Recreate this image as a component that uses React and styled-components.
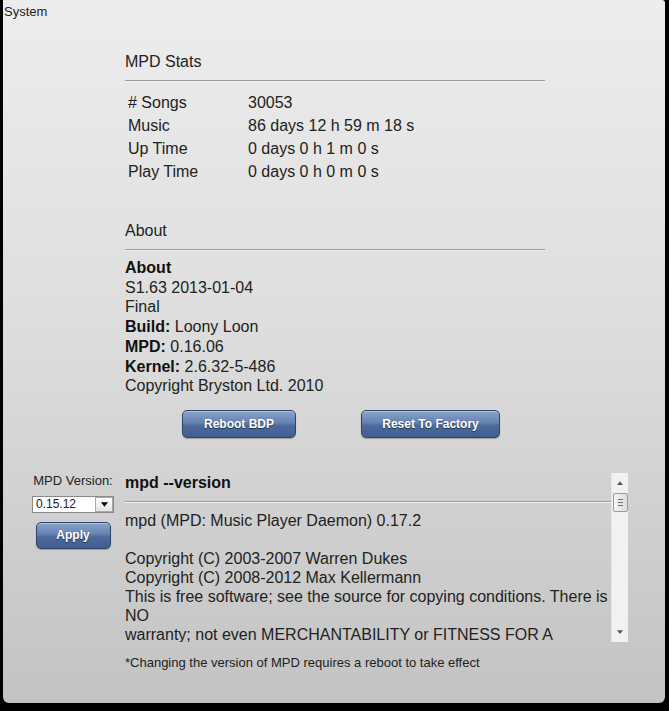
import React from "react";
import styled, { createGlobalStyle } from "styled-components";

const Global = createGlobalStyle`
  html, body {
    margin: 0;
    padding: 0;
    background: #000;
  }
  body {
    font-family: "Liberation Sans", Arial, sans-serif;
    color: #222;
  }
`;

const Panel = styled.div`
  margin-left: 3px;
  width: 662px;
  height: 703px;
  box-sizing: border-box;
  background: linear-gradient(to bottom, #ededed 0%, #dedede 45%, #c3c3c3 100%);
  border-radius: 0 3px 6px 6px;
  overflow: hidden;
`;

const Title = styled.div`
  padding: 4px 0 0 1px;
  font-size: 13px;
  line-height: 16px;
`;

const Column = styled.div`
  margin-left: 122px;
  width: 420px;
`;

const Heading = styled.div`
  margin-top: ${(p) => p.$top}px;
  font-size: 16px;
  line-height: 22px;
`;

const Rule = styled.div`
  margin-top: ${(p) => p.$gap || 7}px;
  height: 0;
  border-top: 1px solid #9c9c9c;
  border-bottom: 1px solid #f2f2f2;
`;

const StatsGrid = styled.div`
  margin-top: 9px;
  display: grid;
  grid-template-columns: 120px 1fr;
  font-size: 16px;
  line-height: 23px;

  span {
    padding-left: 3px;
  }
`;

const AboutList = styled.div`
  margin-top: 7px;
  font-size: 16px;
  line-height: 19.7px;

  b {
    font-weight: bold;
    color: #111;
  }
`;

const ButtonRow = styled.div`
  margin-top: 14px;
  padding-left: 57px;
  display: flex;
  gap: 65px;
`;

const BlueButton = styled.button`
  width: ${(p) => p.$w}px;
  height: ${(p) => p.$h || 28}px;
  box-sizing: border-box;
  border: 1px solid #2f4468;
  border-radius: 5px;
  background: linear-gradient(to bottom, #8aa3c9 0%, #6582b1 45%, #4d6b9d 55%, #3f5d8e 100%);
  box-shadow: inset 0 1px 0 rgba(255, 255, 255, 0.35), 0 1px 1px rgba(0, 0, 0, 0.25);
  color: #fff;
  font-family: "Liberation Sans", Arial, sans-serif;
  font-weight: bold;
  font-size: 12px;
  text-shadow: 0 1px 1px rgba(0, 0, 0, 0.55);
  padding: 0;
  cursor: pointer;
`;

const BottomRow = styled.div`
  margin-top: 35px;
  padding-left: 28px;
  display: flex;
  align-items: flex-start;
`;

const Side = styled.div`
  width: 84px;
  display: flex;
  flex-direction: column;
  align-items: center;
`;

const SideLabel = styled.div`
  font-size: 13px;
  line-height: 16px;
`;

const Select = styled.div`
  margin-top: 7px;
  width: 82px;
  height: 17px;
  box-sizing: border-box;
  border: 1px solid #8a8a8a;
  background: #fff;
  display: flex;
  align-items: stretch;
  font-size: 12px;
`;

const SelectValue = styled.div`
  flex: 1;
  padding-left: 3px;
  line-height: 15px;
`;

const SelectArrow = styled.div`
  width: 16px;
  border: 1px solid #a9a9a9;
  background: linear-gradient(to bottom, #fdfdfd, #e4e4e4);
  display: flex;
  align-items: center;
  justify-content: center;
`;

const ApplyWrap = styled.div`
  margin-top: 9px;
`;

const OutputBox = styled.div`
  margin-left: 5px;
  width: 508px;
  height: 169px;
  display: flex;
`;

const OutputContent = styled.div`
  flex: 1;
  overflow: hidden;
  padding-left: 5px;
`;

const OutputTitle = styled.div`
  font-size: 16px;
  font-weight: bold;
  line-height: 19px;
  color: #111;
`;

const OutputText = styled.div`
  margin-top: 8px;
  font-size: 16px;
  line-height: 19px;
  white-space: pre;
`;

const Scrollbar = styled.div`
  width: 17px;
  background: #f1f1f1;
  border-left: 1px solid #e6e6e6;
  box-sizing: border-box;
  display: flex;
  flex-direction: column;
  align-items: center;
`;

const ScrollArrow = styled.div`
  height: 20px;
  width: 100%;
  display: flex;
  align-items: center;
  justify-content: center;
`;

const Thumb = styled.div`
  width: 15px;
  height: 19px;
  box-sizing: border-box;
  border: 1px solid #9a9a9a;
  border-radius: 2px;
  background: linear-gradient(to right, #f6f6f6, #dcdcdc);
  display: flex;
  flex-direction: column;
  align-items: center;
  justify-content: center;
  gap: 2px;

  i {
    display: block;
    width: 5px;
    height: 1px;
    background: #6e6e6e;
  }
`;

const Track = styled.div`
  flex: 1;
`;

const Note = styled.div`
  margin-top: 13px;
  margin-left: 122px;
  font-size: 13px;
  line-height: 15px;
  color: #222;
`;

const stats = [
  ["# Songs", "30053"],
  ["Music", "86 days 12 h 59 m 18 s"],
  ["Up Time", "0 days 0 h 1 m 0 s"],
  ["Play Time", "0 days 0 h 0 m 0 s"],
];

const versionLines = [
  "mpd (MPD: Music Player Daemon) 0.17.2",
  "",
  "Copyright (C) 2003-2007 Warren Dukes",
  "Copyright (C) 2008-2012 Max Kellermann",
  "This is free software; see the source for copying conditions. There is",
  "NO",
  "warranty; not even MERCHANTABILITY or FITNESS FOR A",
];

const Tri = ({ up, size = 7, color = "#333" }) => (
  <svg width={size} height={Math.ceil(size / 2) + 1} viewBox="0 0 8 5">
    <path d={up ? "M0 5 L4 0 L8 5 Z" : "M0 0 L8 0 L4 5 Z"} fill={color} />
  </svg>
);

export default function App() {
  return (
    <>
      <Global />
      <Panel>
        <Title>System</Title>
        <Column>
          <Heading $top={31}>MPD Stats</Heading>
          <Rule />
          <StatsGrid>
            {stats.map(([k, v]) => (
              <React.Fragment key={k}>
                <span>{k}</span>
                <span>{v}</span>
              </React.Fragment>
            ))}
          </StatsGrid>

          <Heading $top={37}>About</Heading>
          <Rule />
          <AboutList>
            <div><b>About</b></div>
            <div>S1.63 2013-01-04</div>
            <div>Final</div>
            <div><b>Build:</b> Loony Loon</div>
            <div><b>MPD:</b> 0.16.06</div>
            <div><b>Kernel:</b> 2.6.32-5-486</div>
            <div>Copyright Bryston Ltd. 2010</div>
          </AboutList>

          <ButtonRow>
            <BlueButton $w={114}>Reboot BDP</BlueButton>
            <BlueButton $w={139}>Reset To Factory</BlueButton>
          </ButtonRow>
        </Column>

        <BottomRow>
          <Side>
            <SideLabel>MPD Version:</SideLabel>
            <Select>
              <SelectValue>0.15.12</SelectValue>
              <SelectArrow>
                <Tri size={7} color="#000" />
              </SelectArrow>
            </Select>
            <ApplyWrap>
              <BlueButton $w={75} $h={27}>Apply</BlueButton>
            </ApplyWrap>
          </Side>

          <OutputBox>
            <OutputContent>
              <OutputTitle>mpd --version</OutputTitle>
              <Rule $gap={9} />
              <OutputText>
                {versionLines.map((l, i) => (
                  <div key={i}>{l || " "}</div>
                ))}
              </OutputText>
            </OutputContent>
            <Scrollbar>
              <ScrollArrow>
                <Tri up size={6} color="#555" />
              </ScrollArrow>
              <Thumb>
                <i />
                <i />
                <i />
              </Thumb>
              <Track />
              <ScrollArrow>
                <Tri size={6} color="#555" />
              </ScrollArrow>
            </Scrollbar>
          </OutputBox>
        </BottomRow>

        <Note>*Changing the version of MPD requires a reboot to take effect</Note>
      </Panel>
    </>
  );
}
